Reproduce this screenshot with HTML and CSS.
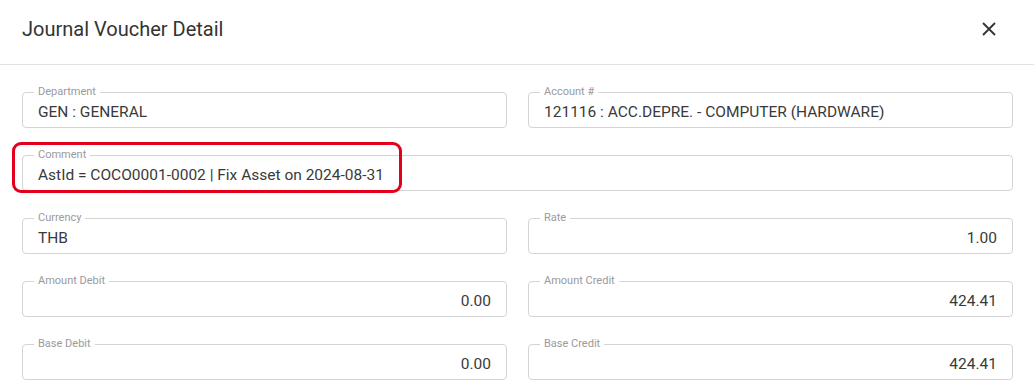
FILE: index.html
```html
<!DOCTYPE html>
<html>
<head>
<meta charset="utf-8">
<link rel="stylesheet" href="styles.css">
</head>
<body>
<div class="dialog">
  <div class="header">
    <h1 class="title">Journal Voucher Detail</h1>
    <button class="close" aria-label="Close">
      <svg width="14" height="14" viewBox="0 0 14 14"><path d="M1 1 L13 13 M13 1 L1 13" stroke="#333" stroke-width="1.8" fill="none"/></svg>
    </button>
  </div>
  <div class="form">
    <div class="field"><span class="label">Department</span><span class="value">GEN : GENERAL</span></div>
    <div class="field"><span class="label">Account #</span><span class="value">121116 : ACC.DEPRE. - COMPUTER (HARDWARE)</span></div>
    <div class="field wide"><span class="label">Comment</span><span class="value">AstId = COCO0001-0002 | Fix Asset on 2024-08-31</span><span class="highlight"></span></div>
    <div class="field"><span class="label">Currency</span><span class="value">THB</span></div>
    <div class="field num"><span class="label">Rate</span><span class="value">1.00</span></div>
    <div class="field num"><span class="label">Amount Debit</span><span class="value">0.00</span></div>
    <div class="field num"><span class="label">Amount Credit</span><span class="value">424.41</span></div>
    <div class="field num"><span class="label">Base Debit</span><span class="value">0.00</span></div>
    <div class="field num"><span class="label">Base Credit</span><span class="value">424.41</span></div>
  </div>
</div>
</body>
</html>
```
FILE: styles.css
```css
* { box-sizing: border-box; }
html, body { margin: 0; padding: 0; background: #fff; }
body { font-family: Roboto, "Liberation Sans", Arial, sans-serif; color: #333; width: 1034px; height: 389px; overflow: hidden; }
.header {
  height: 65px;
  border-bottom: 1px solid #e2e2e2;
  display: flex;
  align-items: center;
  justify-content: space-between;
  padding: 0 38px 6px 22px;
}
.title { margin: 0; font-size: 20px; font-weight: 400; color: #333; letter-spacing: 0; }
.close { border: none; background: none; padding: 0; width: 14px; height: 14px; display: flex; cursor: pointer; }
.form {
  display: grid;
  grid-template-columns: 1fr 1fr;
  column-gap: 21px;
  row-gap: 27px;
  padding: 27px 21px 0 22px;
}
.field {
  position: relative;
  height: 36px;
  border: 1px solid #d4d4d4;
  border-radius: 4px;
  display: flex;
  align-items: center;
  padding: 3px 15px 0 15px;
}
.field.wide { grid-column: 1 / span 2; }
.field.num { justify-content: flex-end; }
.label {
  position: absolute;
  top: -8px;
  left: 11px;
  padding: 0 4px;
  background: #fff;
  font-size: 11px;
  line-height: 14px;
  color: #9a9a9a;
}
.value { font-size: 15.5px; color: #3a3a3a; white-space: nowrap; }
.highlight {
  position: absolute;
  left: -11px;
  top: -14px;
  width: 390px;
  height: 51px;
  border: 3px solid #e4001b;
  border-radius: 9px;
  pointer-events: none;
}
```
